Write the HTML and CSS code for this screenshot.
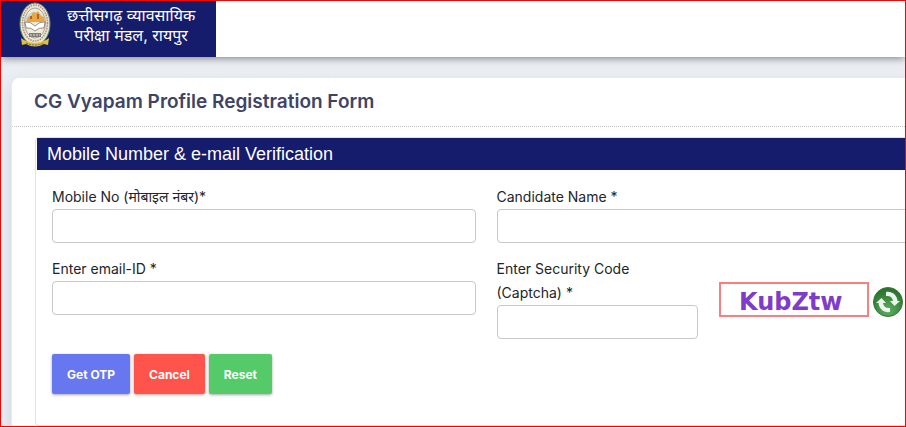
FILE: index.html
```html
<!DOCTYPE html>
<html lang="en">
<head>
  <meta charset="UTF-8">
  <meta name="viewport" content="width=device-width, initial-scale=1.0">
  <title>CG Vyapam Profile Registration Form</title>
  <link rel="stylesheet" href="styles.css">
</head>
<body>
  <div class="page">
    <header class="topbar">
      <div class="brand">
        <svg class="emblem" viewBox="0 0 32 46" aria-hidden="true">
          <ellipse cx="16" cy="22" rx="15" ry="21" fill="#e9e6d2" stroke="#5d8a5c" stroke-width="1"/>
          <ellipse cx="16" cy="21" rx="12.5" ry="18" fill="none" stroke="#b98a80" stroke-width="1.5" stroke-dasharray="1.5 1"/>
          <ellipse cx="16" cy="21" rx="10.5" ry="15" fill="#f3ead4" stroke="#777" stroke-width=".6"/>
          <path d="M6 18a10.500 12 0 0 1 20 0z" fill="#b9dce8"/>
          <path d="M7 20l2-5 3-1 2-4 3 1 2-2 3 5 3 1 1 5z" fill="#e8a83f"/>
          <path d="M11 17v-3h2v3zM18 17v-5h2v5z" fill="#b85c33"/>
          <path d="M6 20q5-1 10 4q5-5 10-4l-1 6q-5-1-9 3q-4-4-9-3z" fill="#fff" stroke="#666" stroke-width=".7"/>
          <path d="M10 31h12v4H10z" fill="#7c7f80"/>
          <path d="M11 33h10" stroke="#ddd" stroke-dasharray="2 1"/>
          <path d="M2 36l3 2q11 6 22 0l3-2-1 7-4-1q-9 5-18 0l-4 1z" fill="#dfc23c"/>
          <path d="M7 41q9 4 18 0" fill="none" stroke="#766b2a" stroke-dasharray="2 1"/>
        </svg>
        <div class="brand-name">छत्तीसगढ़ व्यावसायिक<br>परीक्षा मंडल, रायपुर</div>
      </div>
    </header>

    <main class="card">
      <h1 class="card-title">CG Vyapam Profile Registration Form</h1>
      <section class="panel">
        <h2 class="panel-title">Mobile Number &amp; e-mail Verification</h2>
        <form class="form">
          <div class="form-grid">
            <div class="field">
              <label for="mobile">Mobile No (मोबाइल नंबर)*</label>
              <input type="text" id="mobile">
            </div>
            <div class="field">
              <label for="candidate">Candidate Name *</label>
              <input type="text" id="candidate">
            </div>
            <div class="field">
              <label for="email">Enter email-ID *</label>
              <input type="text" id="email">
            </div>
            <div class="captcha-row">
              <div class="field">
                <label for="captcha">Enter Security Code (Captcha) *</label>
                <input type="text" id="captcha">
              </div>
              <div class="captcha">
                <svg class="captcha-code" viewBox="0 0 150 35" role="img" aria-label="Captcha">
                  <rect x="1" y="1" width="148" height="33" fill="#fff" stroke="#f88080" stroke-width="2"/>
                  <text x="20" y="28">KubZtw</text>
                </svg>
                <button type="button" class="refresh" aria-label="Refresh captcha">
                  <svg viewBox="0 0 30 30">
                    <defs>
                      <radialGradient id="ball" cx=".5" cy=".8" r=".7">
                        <stop offset="0" stop-color="#5cae62"/>
                        <stop offset="1" stop-color="#2b762f"/>
                      </radialGradient>
                    </defs>
                    <circle cx="15" cy="15" r="14.500" fill="url(#ball)" stroke="#37753a"/>
                    <g fill="#eef3ee">
                      <path d="M13 5C19 4 24 8 24.500 14L27 14L21.500 19L17 14H20C19.500 10.500 17 8.500 13 9z"/>
                      <path d="M13 5C19 4 24 8 24.500 14L27 14L21.500 19L17 14H20C19.500 10.500 17 8.500 13 9z" transform="rotate(180 15 15)"/>
                    </g>
                  </svg>
                </button>
              </div>
            </div>
          </div>
          <div class="actions">
            <button type="button" class="btn btn-otp">Get OTP</button>
            <button type="button" class="btn btn-cancel">Cancel</button>
            <button type="reset" class="btn btn-reset">Reset</button>
          </div>
        </form>
      </section>
    </main>
  </div>
</body>
</html>
```
FILE: styles.css
```css
* {
  box-sizing: border-box;
}
body {
  margin: 0;
  font-family: Inter, "Noto Sans", "Noto Sans Devanagari", sans-serif;
  font-size: 14px;
  color: #212529;
}
.page {
  height: 100vh;
  border: 1px solid #f00;
  overflow: hidden;
  background: #ebeff4;
}
.topbar {
  display: flex;
  height: 56px;
  background: #fff;
  box-shadow: 0 1px 8px rgba(0, 0, 0, 0.5);
}
.brand {
  display: flex;
  align-items: flex-start;
  gap: 16px;
  width: 215px;
  padding: 1px 0 0 18px;
  background: #151c6c;
}
.emblem {
  width: 32px;
  height: 46px;
}
.brand-name {
  color: #fff;
  font-size: 16px;
  line-height: 20px;
  padding-top: 3px;
  text-align: center;
  white-space: nowrap;
}

/* the card runs past the right edge of the frame */
.card {
  margin: 20px -56px 0 10px;
  padding-bottom: 20px;
  background: #fff;
  border-top: 1px solid #deebfd;
  border-left: 1px solid #deebfd;
  border-radius: 8px;
  box-shadow: 0 8px 16px rgba(130, 145, 180, 0.3);
}
.card-title {
  margin: 0;
  padding: 12px 22px;
  border-bottom: 1px dotted #c4c4c4;
  font-size: 19px;
  line-height: 24px;
  font-weight: 600;
  color: #3d4465;
}
.panel {
  margin: 10px 24px 0 23px;
  border: 1px solid #e2e2e2;
  border-radius: 4px;
}
.panel-title {
  margin: 0 0 0 1px;
  padding: 0 10px;
  background: #151c6c;
  color: #fff;
  font-family: "Liberation Sans", Arial, sans-serif;
  font-size: 18px;
  line-height: 32px;
  font-weight: 400;
}
.form {
  padding: 15px 16px 31px;
}
.form-grid {
  display: grid;
  grid-template-columns: 1fr 1fr;
  column-gap: 21px;
  row-gap: 14px;
}
.field {
  display: flex;
  flex-direction: column;
}
.field label {
  line-height: 24px;
}
.field input {
  width: 100%;
  height: 34px;
  padding: 6px 12px;
  border: 1px solid #c8c8c8;
  border-radius: 4px;
  background: #fff;
  font: inherit;
}
.captcha-row {
  display: grid;
  grid-template-columns: 1fr 1fr;
  column-gap: 21px;
}
.captcha {
  display: flex;
  align-items: flex-end;
  gap: 4px;
  padding-bottom: 22px;
}
.captcha-code {
  width: 150px;
  height: 35px;
}
.captcha-code text {
  font-family: "DejaVu Sans", sans-serif;
  font-size: 24px;
  font-weight: 700;
  fill: #7e3cc8;
}
.refresh {
  width: 30px;
  height: 30px;
  padding: 0;
  border: 0;
  background: none;
  cursor: pointer;
}
.refresh svg {
  display: block;
}
.actions {
  display: flex;
  gap: 4px;
  margin-top: 15px;
}
.btn {
  height: 40px;
  padding: 0 15px;
  border: 0;
  border-radius: 2px;
  box-shadow: 0 1px 3px rgba(0, 0, 0, 0.35);
  color: #fff;
  font-family: inherit;
  font-size: 12px;
  font-weight: 700;
  cursor: pointer;
}
.btn-otp {
  background: #6777ef;
}
.btn-cancel {
  background: #fe544b;
}
.btn-reset {
  background: #54ca68;
}
```
